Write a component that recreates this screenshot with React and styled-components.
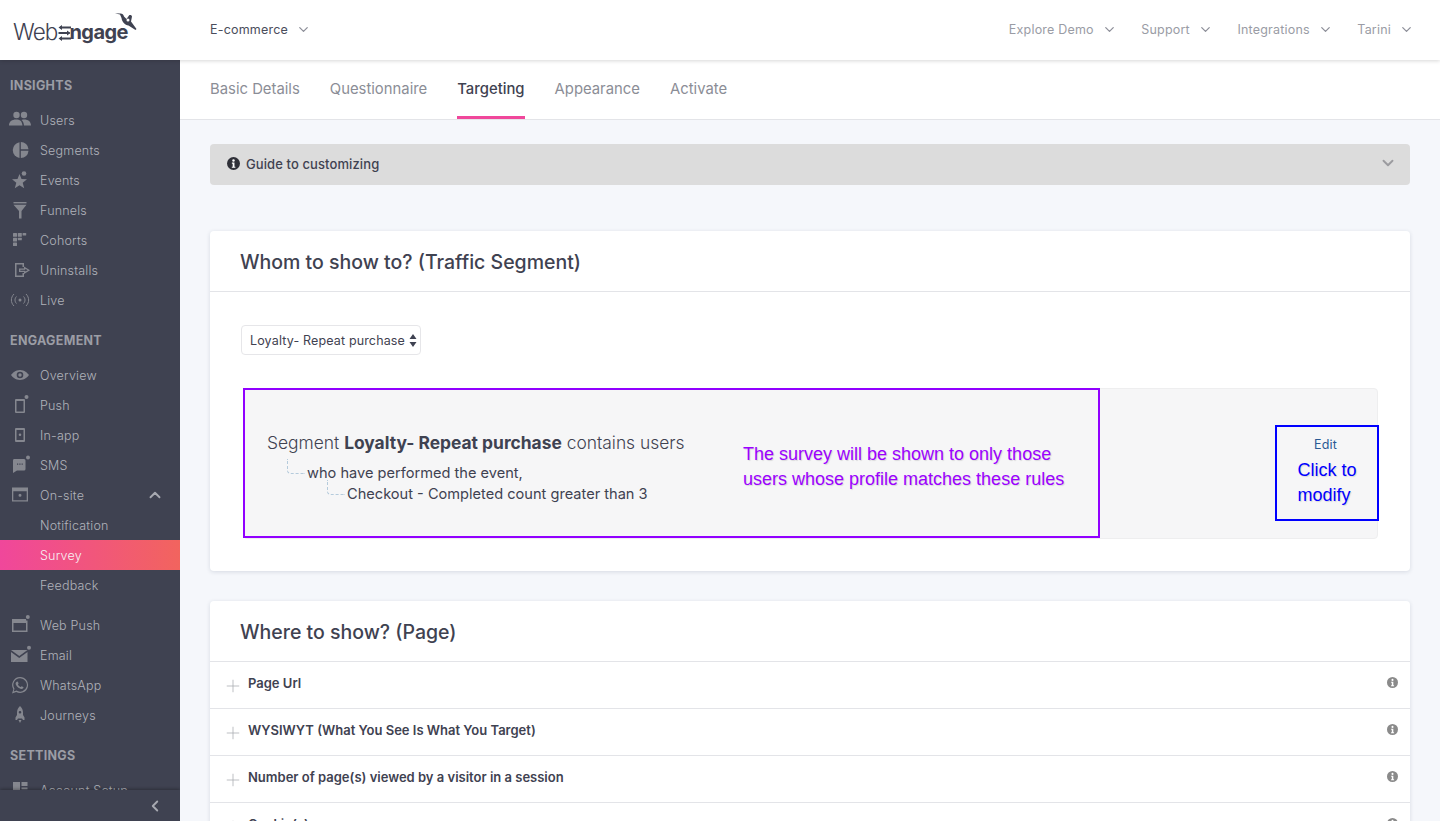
import React from "react";
import styled, { createGlobalStyle } from "styled-components";
import { ChevronDown, ChevronUp, ChevronLeft, Plus } from "lucide-react";

const Global = createGlobalStyle`
  html, body { margin: 0; padding: 0; height: 100%; overflow: hidden; background: #f5f7fb; }
  * { box-sizing: border-box; }
  body { font-family: Inter, "Noto Sans", sans-serif; color: #3f4251; }
`;

const Page = styled.div`display: flex; flex-direction: column; height: 821px; width: 1440px; overflow: hidden;`;
const Header = styled.header`
  height: 60px; flex: none; display: flex; align-items: center; background: #fff;
  box-shadow: 0 1px 4px rgba(0,0,0,.16); position: relative; z-index: 3; padding-right: 26px;
`;
const LogoBox = styled.div`width: 210px; flex: none; height: 60px; position: relative; display: flex; align-items: center; padding: 4px 0 0 13px;`;
const LogoThin = styled.span`font-size: 22.5px; font-weight: 300; letter-spacing: -0.9px; color: #3f4251; line-height: 1;`;
const LogoBold = styled.span`font-size: 20px; font-weight: 700; letter-spacing: -0.6px; color: #3f4251; line-height: 1; margin-left: -1px;`;
const LogoArrows = styled.svg`width: 13px; height: 16px; margin: 1px 0 0 0; flex: none;`;
const LogoBird = styled.svg`position: absolute; left: 113px; top: 12px; width: 24px; height: 20px;`;
const TopItem = styled.div`
  display: flex; align-items: center; font-size: 12.5px; letter-spacing: .2px; gap: 8px; color: ${p => p.$dark ? "#4a4d5b" : "#9a9ca5"};
  margin: -2px 0 0 ${p => p.$ml || 0}px; svg { color: #8d8f99; }
`;
const TopRight = styled.div`margin-left: auto; display: flex; align-items: center;`;

const Body = styled.div`flex: 1; display: flex; min-height: 0;`;
const Side = styled.aside`width: 180px; flex: none; background: #3f4251; position: relative; overflow: hidden; padding-top: 10px;`;
const Section = styled.div`font-size: 12.5px; font-weight: 700; color: #9b9da5; letter-spacing: .3px; height: 30px; line-height: 32px; padding-left: 10px; margin: ${p => p.$first ? "0 0 5px" : "10px 0 5px"};`;
const NavItem = styled.div`
  height: 30px; display: flex; align-items: center; font-size: 12.5px; letter-spacing: .2px; font-weight: 300;
  color: ${p => p.$active ? "#f7f2f4" : "#b0b2ba"}; position: relative; padding-left: 40px;
  background: ${p => p.$active ? "linear-gradient(90deg,#f0479b,#f2645e)" : "none"};
  margin-bottom: ${p => p.$mb || 0}px;
`;
const NavIcon = styled.svg`position: absolute; left: 9px; top: 4px; width: 22px; height: 22px; fill: #85878f; stroke: none;`;
const NavChevron = styled.span`position: absolute; left: 146px; top: 6px; color: #a7a9b1; display: flex;`;
const Collapse = styled.div`
  position: absolute; left: 0; right: 0; bottom: 0; height: 31px; background: #3f4251;
  box-shadow: 0 -1px 3px rgba(0,0,0,.3); display: flex; align-items: center; padding-left: 146px; color: #a7a9b1;
`;

const Main = styled.main`flex: 1; min-width: 0; overflow: hidden;`;
const Tabs = styled.nav`height: 60px; background: #fff; border-bottom: 1px solid #e3e4e8; display: flex; gap: 30px; padding-left: 30px;`;
const Tab = styled.div`
  height: 59px; padding-bottom: 1px; display: flex; align-items: center; font-size: 14.85px; font-weight: ${p => p.$active ? 500 : 400};
  color: ${p => p.$active ? "#3f4251" : "#8b8d96"};
  border-bottom: 3px solid ${p => p.$active ? "#f0479b" : "transparent"}; border-top: 3px solid transparent;
`;
const Content = styled.div`padding: 24px 30px 0;`;
const Guide = styled.div`
  height: 41px; background: #dcdcdc; border-radius: 4px; display: flex; align-items: center; padding: 0 13px 2px 17px;
  font-size: 13px; font-weight: 500; color: #3f4251; gap: 6px; margin-bottom: 46px; letter-spacing: .1px;
`;
const GuideChevron = styled.span`margin-left: auto; display: flex; color: #9b9b9f; margin-top: -2px;`;
const Card = styled.section`background: #fff; border-radius: 4px; box-shadow: 0 1px 4px rgba(30,40,80,.14); margin-bottom: 30px;`;
const CardTitle = styled.h2`
  margin: 0; height: 61px; border-bottom: 1px solid #e3e4e8; padding: 2px 30px 0; display: flex; align-items: center;
  font-size: 19.5px; font-weight: 500; color: #3f4251;
`;
const CardBody = styled.div`padding: 33px 32px 32px 30px;`;
const Select = styled.div`
  width: 180px; height: 30px; margin-left: 1px; border: 1px solid #e6e6e9; border-radius: 4px; display: flex; align-items: center;
  padding: 0 3px 0 8px; font-size: 12.5px; color: #3f4251; justify-content: space-between; letter-spacing: .15px;
`;
const SelectArrows = styled.svg`width: 8px; height: 13px; fill: #3f4251; flex: none;`;
const SegmentBox = styled.div`
  margin: 33px 0 0 3px; height: 151px; background: #f6f6f7; border: 1px solid #eeeeef; border-radius: 4px;
  position: relative; padding: 43px 0 0 23px;
`;
const SegmentLine = styled.div`font-size: 17.4px; font-weight: 300; color: #3f4251; line-height: 21px; b { font-weight: 700; }`;
const Rule = styled.div`
  font-size: 14.6px; color: #3f4251; line-height: 21px; margin-left: ${p => p.$ml}px; position: relative; margin-top: ${p => p.$mt || 0}px;
  &::before { content: ""; position: absolute; left: -20px; top: -4px; width: 17px; height: 14px; border-left: 1px dashed #b5cbdc; border-bottom: 1px dashed #b5cbdc; border-bottom-left-radius: 4px; }
`;
const Annotation = styled.div`
  position: absolute; left: ${p => p.$l}px; top: ${p => p.$t}px; width: ${p => p.$w}px; height: ${p => p.$h}px;
  border: 2px solid ${p => p.$c};
`;
const AnnoText = styled.div`
  position: absolute; left: ${p => p.$l}px; top: ${p => p.$t}px; font-family: "Liberation Sans", Arial, sans-serif; font-size: 18px; line-height: 25px;
  color: ${p => p.$c}; text-shadow: 1px 1px 1px rgba(0,0,0,.12); white-space: nowrap;
`;
const EditLabel = styled.div`position: absolute; left: 1070px; top: 48px; font-size: 12.5px; color: #2a5a94; letter-spacing: .2px;`;
const Row = styled.div`
  height: 47px; border-bottom: 1px solid #e3e4e8; display: flex; align-items: center; padding: 0 12px 4px 13px;
  font-size: 13px; font-weight: 600; color: #3f4251; svg.plus { color: #a8a9af; margin: 5px 5px 0 0; flex: none; }
`;
const InfoWrap = styled.span`margin-left: auto; display: flex; margin-top: -1px;`;

const Info = ({ size = 13, color = "#8a8a8a" }) => (
  <svg width={size} height={size} viewBox="0 0 16 16">
    <circle cx="8" cy="8" r="8" fill={color} />
    <circle cx="8" cy="4.2" r="1.5" fill="#fff" />
    <path d="M6 6.9h3.2v5H10.3v1.4H5.9v-1.4H7V8.2H6z" fill="#fff" />
  </svg>
);

const icons = {
  users: <><circle cx="7.5" cy="6" r="3.2"/><circle cx="15" cy="6" r="3.2"/><path d="M0 16.500c0-4 3-6 7-6s6 1.500 6.500 6zM15 16.500c-.2-2.500-1-4.500-2.500-5.600 1-.4 1.800-.5 2.900-.5 3.500 0 6.600 2 6.600 6.100z"/></>,
  segments: <><path d="M11.800 3v7.200H19.500A7.700 7.700 0 0 0 11.800 3z"/><path d="M10.500 3.200V19A8 8 0 0 1 10.500 3.200z"/><path d="M11.800 11.700h7.700a7.700 7.700 0 0 1-7.700 7.300z"/></>,
  events: <><path d="M10.500 5l2 5 5.500.3-4.300 3.500 1.500 5.500-4.700-3-4.700 3 1.500-5.500L3 10.300l5.500-.3z"/><circle cx="15" cy="4.500" r="2.300"/></>,
  funnels: <><rect x="4.500" y="3" width="13" height="1.400"/><path d="M4.500 5.700h13L12.500 12v7.500h-2.500V12z"/></>,
  cohorts: <><rect x="4" y="4" width="4" height="3.800" rx=".5"/><rect x="8.800" y="4" width="4" height="3.800" rx=".5"/><rect x="13.600" y="4" width="3.600" height="2.500" rx=".5"/><rect x="4" y="8.800" width="4" height="3.800" rx=".5"/><rect x="8.800" y="8.800" width="4" height="2.500" rx=".5"/><rect x="4" y="13.500" width="4" height="3.500" rx=".5"/></>,
  uninstalls: <path fillRule="evenodd" d="M6 4h9v4h-1.500V5.500H7.500v11h6V14H15v4H6zM15 7.500l6 3.700-6 3.700V13h-5v-3.500h5zM16.300 9.800v.9h-5v1h5v.9l2.400-1.400z"/>,
  live: <><circle cx="11" cy="11" r="1.500"/><path d="M7.500 7.500c-2 2-2 5 0 7M14.500 7.500c2 2 2 5 0 7M5 5c-3.500 3.500-3.500 8.500 0 12M17 5c3.500 3.500 3.500 8.500 0 12" fill="none" stroke="#85878f" strokeWidth="1"/></>,
  overview: <path fillRule="evenodd" d="M11 6c4.500 0 7.500 3 9 5-1.500 2-4.500 5-9 5s-7.500-3-9-5c1.500-2 4.500-5 9-5zm0 1.700a3.300 3.300 0 1 0 0 6.600 3.300 3.300 0 0 0 0-6.600zm0 1.600a1.700 1.700 0 1 1 0 3.400 1.700 1.700 0 0 1 0-3.400z"/>,
  push: <><path fillRule="evenodd" d="M7 5h8a1 1 0 0 1 1 1v12a1 1 0 0 1-1 1H7a1 1 0 0 1-1-1V6a1 1 0 0 1 1-1zm.5 2v10.500h7V7z"/><circle cx="17.500" cy="3" r="2"/></>,
  inapp: <path fillRule="evenodd" d="M7 4h8a1 1 0 0 1 1 1v12a1 1 0 0 1-1 1H7a1 1 0 0 1-1-1V5a1 1 0 0 1 1-1zm.5 2v10h7V6zM11 9.500a1.300 1.300 0 1 1 0 2.600 1.300 1.300 0 0 1 0-2.600z"/>,
  sms: <><path fillRule="evenodd" d="M5 5h10a1.500 1.500 0 0 1 1.500 1.500V15a1.500 1.500 0 0 1-1.500 1.500H8L4 19V6.500A1.500 1.500 0 0 1 5 5zm3 4.500v1.200h1.200V9.500zm2.300 0v1.200h1.200V9.500zm2.300 0v1.200h1.200V9.500z"/><circle cx="19" cy="3.500" r="2"/></>,
  onsite: <path fillRule="evenodd" d="M3 3.500h16v14H3zm1.300 3.800v8.900h13.400V7.300zM11 9.800a1.500 1.500 0 1 1 0 3 1.500 1.500 0 0 1 0-3z"/>,
  webpush: <><path fillRule="evenodd" d="M3 5h14v1.500h1.500V18H3zm1.500 4v7.500h12.500V9z"/><circle cx="18.800" cy="3" r="2"/></>,
  email: <><path d="M2 6h16.500l-8.200 6zM2 8l8.200 6 8.300-6v10H2z"/><circle cx="20" cy="3.800" r="2"/></>,
  whatsapp: <path fillRule="evenodd" d="M11 3a8 8 0 1 1-3.800 15L3 19.500l1.400-4.200A8 8 0 0 1 11 3zm0 1.300a6.700 6.700 0 0 0-5.500 10.400l-.8 2.800 2.800-.9A6.700 6.700 0 1 0 11 4.300zM8.500 7.500c.5 0 .8 1.200 1 1.800.1.500-.6 1-.6 1.300.5 1 1.500 2 2.600 2.500.4 0 .8-.9 1.200-.8.600.2 1.600.7 1.800 1 0 1-.9 1.600-1.900 1.600-3-.3-5.700-3-6-5.400 0-1 .9-2 1.900-2z"/>,
  journeys: <><path fillRule="evenodd" d="M11 2c2 2 3 4 3 6.500V11l1.500 2.500V16H14l-1-1.500H9L8 16H6.500v-2.500L8 11V8.500C8 6 9 4 11 2zm0 5a1.300 1.300 0 1 0 0 2.600A1.300 1.300 0 0 0 11 7z"/><path d="M9.500 16h3l-1.500 3z"/></>,
  account: <><rect x="4" y="3" width="7" height="10"/><rect x="12.500" y="3" width="6" height="4"/><rect x="12.500" y="8.500" width="6" height="1.800"/></>,
};

const NI = ({ icon, children, chevron, active, mb }) => (
  <NavItem $active={active} $mb={mb}>
    {icon && <NavIcon viewBox="0 0 22 22">{icons[icon]}</NavIcon>}
    {children}
    {chevron && <NavChevron><ChevronUp size={18} strokeWidth={2.5} /></NavChevron>}
  </NavItem>
);

const TopLink = ({ children, ml, dark }) => (
  <TopItem $ml={ml} $dark={dark}>{children}<ChevronDown size={15} strokeWidth={2} /></TopItem>
);

export default function App() {
  return (
    <Page>
      <Global />
      <Header>
        <LogoBox>
          <LogoThin>Web</LogoThin>
          <LogoArrows viewBox="0 0 13 16">
            <path d="M2 2.500h11M.5 8h11M2 13.500h11" stroke="#3f4251" strokeWidth="1.800" fill="none" />
            <path d="M4 0L.5 2.500 4 5zM9 5.500L12.500 8 9 10.500zM4 11L.5 13.500 4 16z" fill="#3f4251" />
          </LogoArrows>
          <LogoBold>ngage</LogoBold>
          <LogoBird viewBox="0 0 24 20">
            <path fillRule="evenodd" d="M2 1.200L7 1.600C9 1.300 10.500 2.500 11 4.500L13.500 7 16 3.500C16.800 2.700 18.500 3 19 4.500L18 9.500 23.500 17 22.500 18 15.500 13.500C12 13 9 10 8.500 6L7 2.500zM15 6.500a1.500 1.500 0 1 0 0 3 1.500 1.500 0 0 0 0-3z" fill="#3f4251" />
          </LogoBird>
        </LogoBox>
        <TopLink dark>E-commerce</TopLink>
        <TopRight>
          <TopLink>Explore Demo</TopLink>
          <TopLink ml={24.5}>Support</TopLink>
          <TopLink ml={24.5}>Integrations</TopLink>
          <TopLink ml={24.5}>Tarini</TopLink>
        </TopRight>
      </Header>
      <Body>
        <Side>
          <Section $first>INSIGHTS</Section>
          <NI icon="users">Users</NI>
          <NI icon="segments">Segments</NI>
          <NI icon="events">Events</NI>
          <NI icon="funnels">Funnels</NI>
          <NI icon="cohorts">Cohorts</NI>
          <NI icon="uninstalls">Uninstalls</NI>
          <NI icon="live">Live</NI>
          <Section>ENGAGEMENT</Section>
          <NI icon="overview">Overview</NI>
          <NI icon="push">Push</NI>
          <NI icon="inapp">In-app</NI>
          <NI icon="sms">SMS</NI>
          <NI icon="onsite" chevron>On-site</NI>
          <NI>Notification</NI>
          <NI active>Survey</NI>
          <NI mb={10}>Feedback</NI>
          <NI icon="webpush">Web Push</NI>
          <NI icon="email">Email</NI>
          <NI icon="whatsapp">WhatsApp</NI>
          <NI icon="journeys">Journeys</NI>
          <Section>SETTINGS</Section>
          <NI icon="account">Account Setup</NI>
          <Collapse><ChevronLeft size={18} strokeWidth={2.5} /></Collapse>
        </Side>
        <Main>
          <Tabs>
            <Tab>Basic Details</Tab>
            <Tab>Questionnaire</Tab>
            <Tab $active>Targeting</Tab>
            <Tab>Appearance</Tab>
            <Tab>Activate</Tab>
          </Tabs>
          <Content>
            <Guide>
              <Info size={13} color="#2f3038" />
              Guide to customizing
              <GuideChevron><ChevronDown size={18} strokeWidth={2.5} /></GuideChevron>
            </Guide>
            <Card>
              <CardTitle>Whom to show to? (Traffic Segment)</CardTitle>
              <CardBody>
                <Select>
                  Loyalty- Repeat purchase
                  <SelectArrows viewBox="0 0 8 13"><path d="M4 0l3.500 5H.5zM4 13L.5 8h7z" /></SelectArrows>
                </Select>
                <SegmentBox>
                  <SegmentLine>Segment <b>Loyalty- Repeat purchase</b> contains users</SegmentLine>
                  <Rule $ml={40} $mt={10}>who have performed the event,</Rule>
                  <Rule $ml={80}>Checkout - Completed count greater than 3</Rule>
                  <Annotation $l={-1} $t={-1} $w={857} $h={150} $c="#9100ff" />
                  <AnnoText $l={499} $t={53} $c="#9b00ff">The survey will be shown to only those<br />users whose profile matches these rules</AnnoText>
                  <EditLabel>Edit</EditLabel>
                  <Annotation $l={1031} $t={36} $w={104} $h={96} $c="#0000ff" />
                  <AnnoText $l={1053.500} $t={69} $c="#0000ff">Click to<br />modify</AnnoText>
                </SegmentBox>
              </CardBody>
            </Card>
            <Card>
              <CardTitle>Where to show? (Page)</CardTitle>
              {["Page Url", "WYSIWYT (What You See Is What You Target)", "Number of page(s) viewed by a visitor in a session", "Cookie(s)"].map(t => (
                <Row key={t}>
                  <Plus className="plus" size={20} strokeWidth={0.9} />
                  {t}
                  <InfoWrap><Info size={11} /></InfoWrap>
                </Row>
              ))}
            </Card>
          </Content>
        </Main>
      </Body>
    </Page>
  );
}
